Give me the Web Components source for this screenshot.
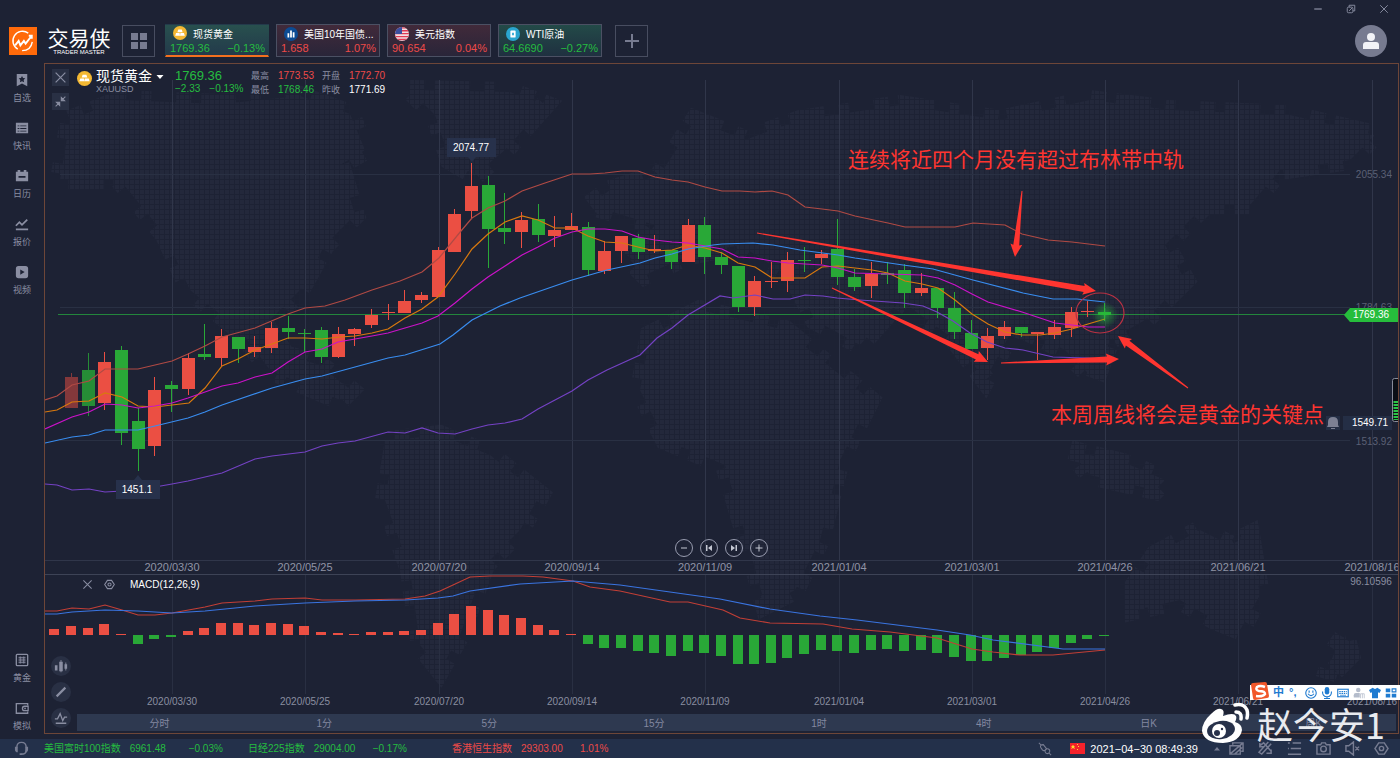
<!DOCTYPE html>
<html lang="zh-CN">
<head>
<meta charset="utf-8">
<title>交易侠</title>
<style>
  :root {
    --bg: #1d2234;
    --panel: #293044;
    --muted: #8a8ea2;
    --dim: #5b6074;
    --up: #eb4f43;
    --down: #29a837;
    --up-text: #ee4a48;
    --down-text: #25bd40;
    --frame: #6d4638;
  }
  body {
    margin: 0;
    background: var(--bg);
    color: #fff;
    font-family: "Liberation Sans", "Noto Sans CJK SC", sans-serif;
    font-size: 10px;
    overflow: hidden;
  }
</style>
</head>
<body>
<trade-app></trade-app>

<script>
// base class: every element clones its own template in an open shadow root
class BaseElement extends HTMLElement {
  constructor () {
    super();
    this.attachShadow({ mode: 'open' });
  }
  getTemplate () {
    const template = document.createElement('template');
    template.innerHTML = `
      <style>
        * { box-sizing: border-box; }
        button { margin: 0; padding: 0; border: 0; background: none; color: inherit; font: inherit; cursor: pointer; }
        ${this.getStyles()}
      </style>
      ${this.getMarkup()}
    `;
    return template;
  }
  render () {
    this.shadowRoot.appendChild(this.getTemplate().content.cloneNode(true));
  }
  connectedCallback () {
    if (!this.shadowRoot.hasChildNodes()) this.render();
  }
}

// ---------- icons (16 x 16 grid, currentColor) ----------
const ICONS = {
  star: '<path fill="currentColor" fill-rule="evenodd" d="M2 1h12v14l-6-3-6 3zM8 3.500l1.200 2.300 2.500.300-1.800 1.800.500 2.600L8 9.300l-2.400 1.200.500-2.600-1.800-1.800 2.500-.300z"/>',
  news: '<path fill="currentColor" fill-rule="evenodd" d="M1 2h14v12H1zM3 5h2v1H3zM6 5h7v1H6zM3 8h2v1H3zM6 8h7v1H6zM3 11h2v1H3zM6 11h7v1H6z"/>',
  calendar: '<path fill="currentColor" fill-rule="evenodd" d="M1 3h2V1h3v2h4V1h3v2h2v11H1zM4 8v2h8V8z"/>',
  quote: '<path fill="none" stroke="currentColor" stroke-width="2" d="M1 10l4-4 3 3 6-6M1 14h14"/>',
  video: '<path fill="currentColor" fill-rule="evenodd" d="M4 1h8q3 0 3 3v8q0 3-3 3H4q-3 0-3-3V4q0-3 3-3zM6 5v6l5-3z"/>',
  gold: '<g fill="none" stroke="currentColor"><rect x="1.500" y="1.500" width="13" height="13" rx="1" stroke-width="1.500"/><path d="M4 5h8M4 7h8M4 9h8M4 11h8M6 4v8M10 4v8" /></g>',
  wallet: '<g fill="none" stroke="currentColor" stroke-width="1.500"><path d="M14.500 5V3H1.500v11h13v-2"/><path d="M15 6h-4q-2.500 0-2.500 2.500T11 11h4z"/></g><circle cx="11.500" cy="8.500" r="1" fill="currentColor"/>',
  headset: '<path fill="none" stroke="currentColor" stroke-width="1.500" d="M3 7q0-5.500 5-5.500T13 7M13 10q0 4-5 4"/><path fill="currentColor" d="M1 6h3v6Q1 12 1 9zM15 6h-3v6q3 0 3-3zM6 13h3v2H6z"/>',
  close: '<path stroke="currentColor" fill="none" stroke-width="1.500" d="M2 2l12 12M14 2L2 14"/>',
  shrink: '<path stroke="currentColor" fill="currentColor" stroke-width="1.300" d="M14 2l-4 4M2 14l4-4M9 3v4h4zM3 9h4v4z"/>',
  hex: '<g fill="none" stroke="currentColor" stroke-width="1.500"><path d="M5 2h6l4 6-4 6H5L1 8z"/><circle cx="8" cy="8" r="2.300"/></g>',
  minus: '<path stroke="currentColor" stroke-width="2" d="M2 8h12"/>',
  plus: '<path stroke="currentColor" stroke-width="2" d="M1 8h14M8 1v14"/>',
  first: '<path fill="currentColor" d="M2 2h3v12H2zM14 2v12L6 8z"/>',
  last: '<path fill="currentColor" d="M11 2h3v12h-3zM2 2v12l8-6z"/>',
  grid: '<path fill="currentColor" d="M0 0h7v7H0zM9 0h7v7H9zM0 9h7v7H0zM9 9h7v7H9z"/>',
  restore: '<g fill="none" stroke="currentColor" stroke-width="1.500"><rect x="2" y="5" width="9" height="9" rx="2"/><path d="M5 5V2h9v9h-3M5 11l5-5"/></g>',
  candles: '<path fill="currentColor" d="M1 7h3v6H1zM6 3h4v11H6zM12 6h3v5h-3zM7.500 1h1v14h-1zM13 4h1v9h-1z"/>',
  pen: '<path stroke="currentColor" stroke-width="2.500" d="M3 13L13 3"/>',
  wave: '<path fill="none" stroke="currentColor" stroke-width="1.500" d="M1 9h3l3-6 3 8 2-4h3M2 14h12"/>',
  plug: '<g fill="none" stroke="currentColor" stroke-width="1.200"><path d="M1 1l3 3M3 6q-1-3 3-3l4 5q-3 3-5 1zM15 15l-3-3M8 11q0-4 4-3 3 2 0 5-3 1-4-2z"/></g>',
  layers: '<path fill="none" stroke="currentColor" stroke-width="1.500" d="M4 4V2h11v9h-2M1 5h11v9H1zM1 14L15 2M6 14l8-7"/>',
  tools: '<path fill="none" stroke="currentColor" stroke-width="1.600" d="M2 5l4-3 8 9M14 3L4 14l-3-2L11 1M9 13h5v-4M2 2v4h4"/>',
  list: '<path stroke="currentColor" stroke-width="1.600" d="M1 2h2M6 2h9M4 8h11M1 14h14M1 8h1"/>',
  camera: '<g fill="none" stroke="currentColor" stroke-width="1.500"><path d="M1 4h4l1-2h4l1 2h4v10H1z"/><circle cx="8" cy="8.500" r="3"/></g>',
  mute: '<path fill="none" stroke="currentColor" stroke-width="1.500" d="M1 5h3l5-4v14l-5-4H1zM11 6l4 4M15 6l-4 4"/>',
  caret: '<path fill="currentColor" d="M1 4h14l-7 8z"/>',
  up: '<path fill="currentColor" d="M2 11h12L8 4z"/>',
  user: '<circle cx="8" cy="4" r="4" fill="currentColor"/><path fill="currentColor" d="M0 16v-4q0-3 3-3h10q3 0 3 3v4z"/>',
  smile: '<g fill="none" stroke="currentColor" stroke-width="1.500"><circle cx="8" cy="8" r="7"/><path d="M4 9q4 5 8 0M5.500 4.500v3M10.500 4.500v3"/></g>',
  mic: '<rect x="5" y="0" width="6" height="10" rx="3" fill="currentColor"/><path fill="none" stroke="currentColor" stroke-width="1.500" d="M2 6q0 7 6 7t6-7M8 13v3M4 15.500h8"/>',
  keyboard: '<rect x="1" y="3" width="14" height="10" fill="none" stroke="currentColor" stroke-width="1.500"/><path stroke="currentColor" stroke-width="1.500" stroke-dasharray="2 1" d="M3 6h10M3 8.500h10"/><path stroke="currentColor" d="M4 11h8"/>',
  person: '<circle cx="7" cy="4" r="3" fill="currentColor"/><path fill="currentColor" d="M1 14v-3q0-3 3-3h5v6z"/><path fill="none" stroke="currentColor" d="M10 15V9h5v6M12.500 9v6"/>',
  shirt: '<path fill="currentColor" d="M5 1q3 3 6 0l5 3-2 4-2-1v8H4V7L2 8 0 4z"/>',
  blocks: '<path fill="currentColor" d="M1 2h6v5H1zM1 9h6v5H1zM9 9h6v5H9z"/><path fill="none" stroke="currentColor" stroke-width="1.500" d="M9.500 2.500h5v4h-5z"/>',
  coin: '<circle cx="8" cy="8" r="8" fill="#f3b833"/><path fill="#fff" d="M6 4h4l1 3H5zM3.500 8h4l.500 3h-5.500zM8.500 8h4l1 3H8z"/>',
  bond: '<circle cx="8" cy="8" r="8" fill="#0c4b93"/><path fill="#fff" d="M4 7h2v5H4zM7 4h2v8H7zM10 6h2v6h-2z"/>',
  usa: '<clipPath id="c"><circle cx="8" cy="8" r="8"/></clipPath><g clip-path="url(#c)"><path fill="#f3dfe4" d="M0 0h16v16H0z"/><path stroke="#df3a54" stroke-width="1.600" d="M0 1h16M0 4.300h16M0 7.600h16M0 11h16M0 14.300h16"/><path fill="#3b4f9f" d="M0 0h8v8H0z"/></g>',
  oil: '<circle cx="8" cy="8" r="8" fill="#2aa5cf"/><rect x="5" y="4" width="6" height="8" rx="1" fill="#fff"/><path fill="#2aa5cf" d="M7 6.500h2v3H7z"/>',
  brand: '<path fill="#ff6a0a" d="M0 0h16v16H0z"/><path fill="none" stroke="#fff" stroke-width=".8" d="M11 3.500A5.500 5.500 0 1 0 5 12.700M7.500 13.500q5 0 5.800-5"/><path fill="none" stroke="#fff" stroke-width="1.100" d="M3.500 10.500l2-2.500 1 2.500L8.500 8l1 1.500L13 5M11.300 5H13v1.700"/>'
};

class UiIcon extends BaseElement {
  getStyles () {
    return `
      :host { display: inline-block; width: 16px; height: 16px; flex: none; }
      svg { display: block; width: 100%; height: 100%; }
    `;
  }
  getMarkup () {
    return `<svg viewBox="0 0 16 16" aria-hidden="true">${ICONS[this.getAttribute('name')]}</svg>`;
  }
}

// ---------- header ----------
class TickerTab extends BaseElement {
  getStyles () {
    const up = this.hasAttribute('up');
    return `
      :host { display: block; width: 104px; height: 33px; }
      button {
        display: grid; grid-template-columns: 1fr auto; align-content: center;
        width: 100%; height: 100%; padding: 0 3px 0 4px; text-align: left;
        border: 1px solid #4b5063;
        background: linear-gradient(${up ? '#412a3a, #292539' : '#234a48, #1f3040'});
      }
      :host([active]) button { border-color: transparent; border-bottom: 2px solid #f3701f; background: linear-gradient(#28504e, #233a4b); }
      .name { grid-column: 1 / 3; display: flex; align-items: center; gap: 6px; height: 15px; padding-left: 3px; white-space: nowrap; }
      .name ui-icon { width: 14px; height: 14px; }
      .num { color: var(${up ? '--up-text' : '--down-text'}); line-height: 14px; font-size: 11px; }
    `;
  }
  getMarkup () {
    return `
      <button type="button">
        <span class="name"><ui-icon name="${this.getAttribute('icon')}"></ui-icon><slot></slot></span>
        <span class="num">${this.getAttribute('price')}</span>
        <span class="num">${this.getAttribute('change')}</span>
      </button>
    `;
  }
}

class AppHeader extends BaseElement {
  getStyles () {
    return `
      :host { display: block; height: 63px; }
      .window { display: flex; justify-content: flex-end; align-items: center; gap: 23px; height: 18px; padding-right: 11px; color: var(--muted); }
      .window ui-icon { display: block; width: 10px; height: 10px; }
      .bar { display: flex; align-items: center; height: 45px; padding: 0 13px 0 9px; }
      .logo { width: 28px; height: 28px; margin-right: 10px; }
      .brand { width: 64px; margin-right: 11px; text-align: center; white-space: nowrap; }
      .brand b { display: block; font: 400 21px/23px "Noto Sans CJK SC", sans-serif; }
      .brand small { display: block; font-size: 6px; line-height: 7px; }
      .box { display: grid; place-items: center; width: 33px; height: 32px; border: 1px solid #484d60; color: #777b90; }
      .tabs { display: flex; gap: 7px; margin: 0 13px 0 10px; }
      .avatar { display: grid; place-items: center; width: 32px; height: 32px; margin-left: auto; border-radius: 50%; background: #777b90; color: #f2f3f7; }
    `;
  }
  getMarkup () {
    return `
      <div class="window">
        <button aria-label="最小化"><ui-icon name="minus"></ui-icon></button>
        <button aria-label="还原"><ui-icon name="restore"></ui-icon></button>
        <button aria-label="关闭"><ui-icon name="close"></ui-icon></button>
      </div>
      <div class="bar">
        <ui-icon class="logo" name="brand"></ui-icon>
        <div class="brand"><b>交易侠</b><small>TRADER MASTER</small></div>
        <button class="box" aria-label="布局"><ui-icon name="grid"></ui-icon></button>
        <div class="tabs">
          <ticker-tab active icon="coin" price="1769.36" change="−0.13%">现货黄金</ticker-tab>
          <ticker-tab up icon="bond" price="1.658" change="1.07%">美国10年国债...</ticker-tab>
          <ticker-tab up icon="usa" price="90.654" change="0.04%">美元指数</ticker-tab>
          <ticker-tab icon="oil" price="64.6690" change="−0.27%">WTI原油</ticker-tab>
        </div>
        <button class="box" aria-label="添加"><ui-icon name="plus"></ui-icon></button>
        <button class="avatar" aria-label="用户"><ui-icon name="user"></ui-icon></button>
      </div>
    `;
  }
}

// ---------- side navigation ----------
class SideNav extends BaseElement {
  getStyles () {
    return `
      :host { display: block; width: 44px; }
      nav { display: flex; flex-direction: column; gap: 6px; height: 100%; padding-top: 1px; }
      a { display: flex; flex-direction: column; align-items: center; gap: 4px; height: 42px; padding-top: 9px; color: var(--muted); text-decoration: none; font-size: 9px; line-height: 14px; }
      a ui-icon { width: 14px; height: 14px; }
      .push { margin-top: auto; }
    `;
  }
  getMarkup () {
    const item = (icon, text, cls = '') => `<a class="${cls}" href="#"><ui-icon name="${icon}"></ui-icon>${text}</a>`;
    return `
      <nav>
        ${item('star', '自选')}${item('news', '快讯')}${item('calendar', '日历')}
        ${item('quote', '报价')}${item('video', '视频')}
        ${item('gold', '黄金', 'push')}${item('wallet', '模拟')}
      </nav>
    `;
  }
}

// ---------- chart data ----------
// [colour, high, body top, body bottom, low], one candle a week
const CANDLES = [
  ['r',373,377,408,408],['g',353,370,406,416],['r',352,362,403,410],['g',346,350,433,445],['g',408,421,449,471],
  ['r',377,390,446,456],['g',381,385,389,412],['r',353,358,389,395],['g',324,354,357,360],['r',329,336,358,366],
  ['g',337,337,349,363],['r',336,347,352,357],['r',322,328,348,353],['g',316,328,332,339],['g',329,333,334,352],
  ['g',327,330,357,363],['r',327,334,357,358],['r',328,329,334,346],['r',309,315,325,328],['r',304,312,313,320],
  ['r',290,301,313,313],['r',292,295,300,303],['r',247,250,297,297],['r',209,214,252,252],['r',163,186,211,219],
  ['g',176,185,229,268],['g',193,228,232,244],['r',212,220,232,248],['g',204,219,235,242],['r',216,230,236,247],
  ['r',213,226,230,230],['g',222,227,270,276],['r',241,251,271,274],['r',236,236,251,263],['g',234,238,252,259],
  ['r',235,249,251,253],['g',250,250,262,269],['r',219,225,262,262],['g',217,225,257,274],['g',252,257,265,274],
  ['g',266,266,307,312],['r',276,281,307,316],['r',262,281,282,288],['r',252,260,281,292],['g',247,260,261,272],
  ['r',250,254,258,264],['g',219,249,277,285],['g',269,277,287,291],['r',262,274,286,298],['g',262,273,275,284],
  ['g',264,270,293,308],['r',273,288,293,296],['g',288,288,308,318],['g',292,308,332,339],['g',320,333,349,349],
  ['r',328,336,348,360],['r',321,327,336,339],['g',327,327,333,337],['r',332,332,334,360],['r',320,327,335,339],
  ['r',307,312,328,337],['r',301,311,312,317],['g',303,312,315,321]
];

const LINES = {
  upper: ['#b04a44', '45,400 57,396 72,385 89,381 105,369 138,369 172,361 188,354 205,346 222,337 255,328 288,314 305,308 325,306 345,300 372,290 400,281 422,272 439,258 461,231 472,218 488,208 505,201 522,191 545,183 572,174 590,174 605,173 622,171 638,171 655,177 672,180 688,182 705,187 722,191 740,191 755,192 772,191 788,195 805,207 822,209 838,211 855,216 888,223 905,227 955,227 973,223 1005,225 1022,234 1048,240 1072,242 1105,246'],
  ma5: ['#d9790e', '45,412 57,410 72,402 89,401 105,393 122,397 138,406 155,407 189,403 205,388 222,366 238,359 255,350 272,344 288,338 305,338 322,339 340,337 355,336 372,333 388,329 405,318 422,309 438,297 455,274 472,249 488,234 505,222 522,216 538,220 555,228 572,228 588,236 605,242 622,243 638,247 655,251 672,250 688,245 705,248 722,253 738,263 755,267 772,278 805,278 822,267 838,266 855,268 872,270 888,273 905,281 922,284 938,288 955,300 972,314 988,324 1005,332 1022,335 1040,335 1055,333 1072,329 1088,324 1105,319'],
  ma10: ['#cb12c9', '45,429 72,417 89,412 105,404 122,405 138,408 155,406 172,403 188,398 222,386 238,383 255,377 272,373 288,362 305,352 322,349 338,342 355,339 372,336 388,333 405,328 422,323 438,316 455,303 472,289 488,277 505,266 522,255 538,247 555,238 572,232 588,229 605,229 622,231 638,237 655,240 672,242 688,243 705,246 722,249 738,257 755,258 772,261 788,263 805,264 822,265 838,268 855,273 888,274 922,275 938,278 955,285 972,294 988,302 1022,312 1055,323 1072,325 1088,327 1105,327'],
  mid: ['#398df0', '45,443 72,437 89,435 105,430 138,430 155,426 188,418 205,412 222,405 272,388 305,379 322,376 355,367 388,358 405,355 440,344 453,335 472,320 500,306 520,298 572,280 607,270 640,263 655,258 672,254 688,249 713,245 722,244 753,243 773,245 800,250 838,255 855,258 903,265 933,269 973,280 1023,293 1053,299 1077,299 1105,302'],
  lower: ['#7442c4', '45,484 57,485 72,490 89,489 105,492 122,491 138,489 155,487 172,484 188,481 222,473 255,459 272,456 305,452 322,446 338,443 355,441 388,432 405,433 422,428 438,433 455,434 472,429 488,425 505,423 522,419 538,409 555,400 572,391 588,380 607,370 640,355 657,338 672,328 688,315 720,296 733,298 755,295 773,299 790,299 805,295 823,296 837,298 860,300 903,303 923,306 937,312 953,321 970,333 987,342 1005,348 1023,350 1053,357 1087,358 1105,359']
};

// end of every histogram bar, the zero line is at 635
const MACD = [629,626,628,624,634,644,639,637,631,628,623,623,625,623,624,626,632,633,634,632,632,631,630,623,614,606,610,615,618,625,630,634,
  644,648,648,651,653,656,651,653,656,664,664,663,658,654,650,651,653,650,649,651,650,653,657,661,661,658,655,652,648,643,639,636];
const DIF = '45,611 57,611 72,608 89,609 105,605 122,610 138,615 155,615 172,613 205,607 222,603 255,601 272,599 305,598 322,600 355,600 405,599 425,596 440,591 453,585 470,577 490,576 523,576 543,577 573,581 590,587 620,591 670,602 688,602 723,610 740,618 770,623 823,624 852,629 890,632 937,638 972,649 993,652 1020,655 1053,655 1105,650';
const DEA = '45,614 57,614 72,612 105,610 138,611 172,613 205,611 255,606 305,603 355,601 405,600 438,598 453,596 470,591 520,584 573,581 620,585 670,592 720,599 770,609 820,616 857,620 937,630 970,635 993,640 1063,649 1105,649';

const DATES = ['2020/03/30','2020/05/25','2020/07/20','2020/09/14','2020/11/09','2021/01/04','2021/03/01','2021/04/26','2021/06/21','2021/08/16'];
const STEP = 133.3;
const weekX = i => Math.round(72 + i * STEP / 8);
const gridX = i => Math.round(172 + i * STEP);

// dotted world map behind both charts, the dashed stroke roughens the coasts
const WORLD = `
  <defs>
    <pattern id="dots" width="5" height="5" patternUnits="userSpaceOnUse"><path fill="#23283b" d="M0 0h4v4H0z"/></pattern>
  </defs>
  <path fill="url(#dots)" stroke="url(#dots)" stroke-width="20" stroke-dasharray="15 10 35 15 10 25" d="M70 120L120 100 220 104 300 96 350 114 365 150 340 165 355 215 325 245 300 290 265 325 285 355 320 365 350 390 340 400 270 370 240 330 190 290 165 235 120 180 60 180z
    M410 90L510 92 545 105 505 150 475 175 450 160 435 115z
    M395 440L440 435 490 455 540 495 520 530 485 565 460 635 440 670 420 645 410 570 385 500z
    M590 205L610 190 660 175 695 120 745 140 800 120 900 105 1000 120 1090 100 1170 110 1290 115 1375 135 1350 160 1280 170 1250 205 1205 205 1165 245 1185 280 1145 320 1110 340 1095 380 1065 350 1015 325 985 380 955 340 900 300 860 345 815 320 795 280 740 245 690 255 645 275 630 260 655 225z
    M650 335L700 310 785 330 840 375 870 400 840 460 820 540 795 590 765 605 750 550 725 465 665 440 640 390z
    M1070 450L1130 465 1165 480 1155 490 1090 475z
    M1135 585L1155 555 1200 530 1230 545 1250 535 1260 595 1240 630 1215 620 1180 600 1135 610z
    M1335 650L1345 635 1350 655 1325 680z"/>
`;
const polyline = (color, points) => `<polyline fill="none" stroke="${color}" stroke-width="1.200" points="${points}"/>`;

// drawn arrow: thin tail that grows up to the head
function arrow (x1, y1, x2, y2) {
  const len = Math.hypot(x2 - x1, y2 - y1);
  const ux = (x2 - x1) / len, uy = (y2 - y1) / len;
  const at = (d, side) => `${x1 + ux * d - uy * side},${y1 + uy * d + ux * side}`;
  return `<polygon fill="#ff3530" points="${[at(0, -.5), at(len - 12, -3), at(len - 13, -6), at(len, 0), at(len - 13, 6), at(len - 12, 3), at(0, .5)].join(' ')}"/>`;
}

class PriceChart extends BaseElement {
  getStyles () {
    return `
      :host { display: grid; min-height: 0; border-bottom: 1px solid #3d4356; }
      svg, .info, .zoom { grid-area: 1 / 1; }
      svg { width: 100%; height: 100%; min-height: 0; }
      .dates, .axis { fill: #9094a6; font-size: 11px; text-anchor: middle; }
      .axis { fill: var(--dim); font-size: 10px; text-anchor: end; }
      .tip { fill: #fff; font-size: 10px; text-anchor: middle; }
      .note { fill: #ff3530; font: 21px "Noto Sans CJK SC", sans-serif; }
      .info { display: flex; align-items: flex-start; align-self: start; justify-self: start; padding: 5px 0 0 7px; z-index: 1; }
      .tools { display: grid; gap: 7px; margin-right: 8px; }
      .tools button { display: grid; place-items: center; width: 17px; height: 17px; background: var(--panel); color: var(--muted); }
      .tools ui-icon { width: 13px; height: 13px; }
      .coin { width: 15px; height: 15px; margin: 2px 4px 0 0; }
      .name { width: 79px; }
      .name button { display: flex; align-items: center; gap: 4px; font-size: 14px; line-height: 15px; }
      .name ui-icon { width: 8px; height: 8px; }
      .name small { display: block; color: var(--muted); font-size: 9px; line-height: 10px; }
      .last { width: 76px; color: var(--down-text); line-height: 12px; }
      .last b { display: block; font-weight: 400; font-size: 13px; line-height: 14px; }
      .last span { margin-right: 9px; }
      dl { display: grid; grid-template-columns: 27px 44px 27px 40px; margin: 0; line-height: 14px; }
      dt { color: var(--muted); font-size: 9px; }
      dd { margin: 0; }
      .up { color: var(--up-text); }
      .down { color: var(--down-text); }
      .zoom { display: flex; align-self: end; justify-self: center; gap: 7px; margin-bottom: 17px; z-index: 1; }
      .zoom button { display: grid; place-items: center; width: 18px; height: 18px; border: 1px solid #989caf; border-radius: 50%; color: #c4c7d2; }
      .zoom ui-icon { width: 8px; height: 8px; }
    `;
  }
  getCandles () {
    return CANDLES.map(([c, high, top, bottom, low], i) => {
      const x = weekX(i);
      const color = c === 'r' ? 'var(--up)' : 'var(--down)';
      return `<g fill="${color}" opacity="${i === 0 ? .5 : i === 1 ? .8 : 1}">
        <rect x="${x - 1}" y="${high}" width="1" height="${low - high}"/>
        <rect x="${x - 7}" y="${top}" width="13" height="${bottom - top}"/></g>`;
    }).join('');
  }
  getMarkup () {
    return `
      <svg viewBox="45 64 1353 510">
        ${WORLD}
        <g stroke="#30364a">
          ${DATES.map((d, i) => `<path d="M${gridX(i)}.5 80V560"/>`).join('')}
          <path stroke="#293043" d="M60 174.500H1350M60 307.500H1350M60 440.500H1350"/><path d="M45 560.500H1398"/>
        </g>
        <path stroke="#23863c" d="M58 314.500H1346"/>
        <g class="dates">${DATES.map((d, i) => `<text x="${gridX(i)}" y="571">${d}</text>`).join('')}</g>
        <g class="axis"><text x="1392" y="178">2055.34</text><text x="1392" y="311">1784.63</text><text x="1392" y="445">1513.92</text></g>
        ${this.getCandles()}
        ${Object.values(LINES).map(([color, points]) => polyline(color, points)).join('')}
        <radialGradient id="glow"><stop stop-color="#26c83a" stop-opacity=".6"/><stop offset="1" stop-color="#26c83a" stop-opacity="0"/></radialGradient>
        <circle cx="1105" cy="315" r="13" fill="url(#glow)"/>
        <path fill="#27314b" d="M447 138h49v19h-20l-4 5-4-5h-21zM116 480h18l4-5 4 5h18v19h-44z"/>
        <text class="tip" x="471" y="151">2074.77</text>
        <text class="tip" x="137" y="493">1451.1</text>
        <path fill="#26bd3c" d="M1344 315l6-7h48v14h-48z"/>
        <path fill="#242e45" d="M1326 416h14v14h-14zM1343 416h49v14h-49z"/>
        <path fill="#7c8094" d="M1327 427l1-2v-3q0-5 5-5t5 5v3l1 2zM1331 428h4v1h-4z"/>
        <g class="tip"><text x="1371" y="318">1769.36</text><text x="1370" y="426">1549.71</text></g>
        <rect x="1392.500" y="378.500" width="8" height="43" rx="2" fill="#0b0e16" stroke="#888c9a"/>
        <path stroke="#2bc548" stroke-width="5" stroke-dasharray="2 1" d="M1396 401v19"/>
        <text class="note" x="848" y="167">连续将近四个月没有超过布林带中轨</text>
        <text class="note" x="1051" y="422">本周周线将会是黄金的关键点</text>
        ${arrow(757, 233, 1096, 291)}${arrow(832, 288, 988, 362)}${arrow(1001, 363, 1119, 359)}
        ${arrow(1022, 191, 1015, 257)}${arrow(1188, 388, 1118, 336)}
        <ellipse cx="1100" cy="313" rx="24" ry="20" fill="none" stroke="#b93143" stroke-width="1.200"/>
      </svg>
      <div class="info">
        <div class="tools">
          <button aria-label="关闭"><ui-icon name="close"></ui-icon></button>
          <button aria-label="缩小"><ui-icon name="shrink"></ui-icon></button>
        </div>
        <ui-icon class="coin" name="coin"></ui-icon>
        <div class="name"><button>现货黄金<ui-icon name="caret"></ui-icon></button><small>XAUUSD</small></div>
        <div class="last"><b>1769.36</b><span>−2.33</span><span>−0.13%</span></div>
        <dl>
          <dt>最高</dt><dd class="up">1773.53</dd><dt>开盘</dt><dd class="up">1772.70</dd>
          <dt>最低</dt><dd class="down">1768.46</dd><dt>昨收</dt><dd>1771.69</dd>
        </dl>
      </div>
      <div class="zoom">
        <button aria-label="缩小"><ui-icon name="minus"></ui-icon></button>
        <button aria-label="最前"><ui-icon name="first"></ui-icon></button>
        <button aria-label="最后"><ui-icon name="last"></ui-icon></button>
        <button aria-label="放大"><ui-icon name="plus"></ui-icon></button>
      </div>
    `;
  }
}

class MacdChart extends BaseElement {
  getStyles () {
    return `
      :host { display: grid; height: 139px; }
      svg, .title { grid-area: 1 / 1; }
      svg { width: 100%; height: 100%; min-height: 0; }
      text { fill: #8a8ea0; font-size: 10px; text-anchor: middle; }
      .title { display: flex; align-items: center; align-self: start; justify-self: start; gap: 11px; height: 18px; padding-left: 37px; z-index: 1; }
      .title button { display: block; color: var(--muted); }
      .title ui-icon { display: block; width: 11px; height: 11px; }
      .title span { padding-left: 4px; }
    `;
  }
  getMarkup () {
    const bars = MACD.map((y, i) => {
      const x = weekX(i - 1) - 6;
      return y < 635
        ? `<rect x="${x}" y="${y}" width="10" height="${635 - y}" fill="var(--up)"/>`
        : `<rect x="${x}" y="635" width="10" height="${y - 635}" fill="var(--down)"/>`;
    }).join('');
    return `
      <svg viewBox="45 575 1353 139">
        ${WORLD}
        <g stroke="#292f42">${DATES.map((d, i) => `<path d="M${gridX(i)}.5 575V694"/>`).join('')}</g>
        ${bars}
        ${polyline('#c23f36', DIF)}${polyline('#3a74e0', DEA)}
        ${DATES.map((d, i) => `<text x="${gridX(i)}" y="705">${d}</text>`).join('')}
        <text x="1371" y="585">96.10596</text>
      </svg>
      <div class="title">
        <button aria-label="关闭"><ui-icon name="close"></ui-icon></button>
        <button aria-label="设置"><ui-icon name="hex"></ui-icon></button>
        <span>MACD(12,26,9)</span>
      </div>
    `;
  }
}

class IntervalBar extends BaseElement {
  getStyles () {
    return `
      :host { display: flex; align-items: flex-end; height: 19px; padding-right: 2px; }
      .tools { display: grid; gap: 6px; width: 32px; padding: 0 0 5px 6px; }
      .tools button { display: grid; place-items: center; width: 20px; height: 20px; border-radius: 50%; background: var(--panel); color: var(--muted); }
      .tools ui-icon { width: 14px; height: 14px; }
      .list { display: grid; grid-template-columns: repeat(8, 1fr); flex: 1; height: 17px; margin-bottom: 2px; background: #2e3950; }
      .list button { color: #8388a0; }
    `;
  }
  getMarkup () {
    const names = ['分时', '1分', '5分', '15分', '1时', '4时', '日K', '周K'];
    return `
      <div class="tools">
        <button aria-label="图表类型"><ui-icon name="candles"></ui-icon></button>
        <button aria-label="画线"><ui-icon name="pen"></ui-icon></button>
        <button aria-label="指标"><ui-icon name="wave"></ui-icon></button>
      </div>
      <div class="list">${names.map(n => `<button>${n}</button>`).join('')}</div>
    `;
  }
}

// ---------- status bar ----------
class IndexQuote extends BaseElement {
  getStyles () {
    return `
      :host { display: flex; gap: 9px; width: 204px; color: var(--down-text); white-space: nowrap; }
      :host([up]) { color: var(--up-text); }
      .price { width: 50px; }
    `;
  }
  getMarkup () {
    return `<slot></slot><span class="price">${this.getAttribute('price')}</span><span>${this.getAttribute('change')}</span>`;
  }
}

class StatusBar extends BaseElement {
  getStyles () {
    return `
      :host { display: flex; align-items: center; height: 19px; padding-right: 11px; background: #23304a; line-height: 18px; }
      button { display: block; color: #777c92; }
      button ui-icon { display: block; width: 15px; height: 15px; }
      .service { width: 44px; padding-left: 14px; }
      .plug { margin-left: auto; margin-right: 18px; }
      .plug ui-icon { width: 14px; height: 14px; }
      .flag { width: 15px; height: 11px; margin-right: 5px; }
      time { font-size: 11px; }
      .caret { margin: 0 8px 0 15px; }
      .caret ui-icon { width: 8px; height: 8px; }
      .icons { display: flex; gap: 14px; }
    `;
  }
  getMarkup () {
    return `
      <button class="service" aria-label="客服"><ui-icon name="headset"></ui-icon></button>
      <index-quote price="6961.48" change="−0.03%">美国富时100指数</index-quote>
      <index-quote price="29004.00" change="−0.17%">日经225指数</index-quote>
      <index-quote up price="29303.00" change="1.01%">香港恒生指数</index-quote>
      <button class="plug" aria-label="连接"><ui-icon name="plug"></ui-icon></button>
      <svg class="flag" viewBox="0 0 15 11"><path fill="#f5222b" d="M0 0h15v11H0z"/><path fill="#ffd92e" d="M3 2l1 1h1l-1 1 1 2-2-1-2 1 1-2-1-1h1zM7 1h1v1H7zM8 3h1v1H8zM7 6h1v1H7z"/></svg>
      <time>2021−04−30 08:49:39</time>
      <button class="caret" aria-label="更多"><ui-icon name="up"></ui-icon></button>
      <div class="icons">
        ${['layers', 'tools', 'list', 'camera', 'mute', 'hex'].map(n => `<button aria-label="${n}"><ui-icon name="${n}"></ui-icon></button>`).join('')}
      </div>
    `;
  }
}

// ---------- floating parts ----------
class ImeBar extends BaseElement {
  getStyles () {
    return `
      :host { position: absolute; right: 0; bottom: 58px; display: flex; align-items: center; gap: 4px; height: 15px; padding: 0 3px 0 23px; background: #fff; color: #1f7bd0; font-size: 11px; }
      .logo { position: absolute; left: 0; top: -3px; width: 20px; height: 19px; }
      ui-icon { width: 12px; height: 12px; }
      .off { color: #b4bccb; }
      b { width: 12px; line-height: 15px; }
    `;
  }
  getMarkup () {
    return `
      <svg class="logo" viewBox="0 0 20 19"><path fill="#f1572a" d="M1 3q0-2 2-2l12-1q2 0 2 2l2 12q0 2-2 2L5 18q-2 0-2-2z"/><path fill="none" stroke="#fff" stroke-width="2.500" d="M15 5q-5-2-8 0-2 3 2 4 6 0 6 3-2 3-9 2"/></svg>
      <b>中</b><b>°,</b>
      <ui-icon name="smile"></ui-icon><ui-icon name="mic"></ui-icon><ui-icon name="keyboard"></ui-icon>
      <ui-icon class="off" name="person"></ui-icon><ui-icon name="shirt"></ui-icon><ui-icon name="blocks"></ui-icon>
    `;
  }
}

class WeiboMark extends BaseElement {
  getStyles () {
    return `
      :host { position: absolute; right: 15px; bottom: 14px; display: flex; align-items: center; gap: 6px; color: #e9ebef; font: 36px/40px "Noto Sans CJK SC", sans-serif; }
      svg { width: 50px; height: 42px; }
    `;
  }
  getMarkup () {
    return `
      <svg viewBox="0 0 50 42">
        <path fill="#fff" d="M20 7q4 1 2 7 11-4 13 0 1 2-1 6 7 2 7 8-2 12-19 13Q3 41 1 29 1 20 10 12q6-6 10-5z"/>
        <ellipse cx="20" cy="28" rx="14" ry="9" fill="#27314a" transform="rotate(-8 20 28)"/>
        <circle cx="18" cy="29" r="7" fill="#fff"/><circle cx="16" cy="31" r="3" fill="#27314a"/><circle cx="21" cy="27" r="1.200" fill="#27314a"/>
        <path fill="none" stroke="#fff" stroke-width="3.500" stroke-linecap="round" d="M34 3q9-2 12 5 1 4 0 8M35 10q6 0 5 7"/>
      </svg>
      <span>赵今安1</span>
    `;
  }
}

class TradeApp extends BaseElement {
  getStyles () {
    return `
      :host { position: relative; display: flex; flex-direction: column; min-height: 100vh; background: var(--bg); overflow: hidden; }
      .main { display: flex; flex: 1; margin-bottom: 5px; }
      .frame { display: flex; flex-direction: column; flex: 1; min-width: 0; margin-right: 1px; border: 1px solid var(--frame); }
      price-chart { flex: 1; }
    `;
  }
  getMarkup () {
    return `
      <app-header></app-header>
      <div class="main">
        <side-nav></side-nav>
        <div class="frame">
          <price-chart></price-chart>
          <macd-chart></macd-chart>
          <interval-bar></interval-bar>
        </div>
      </div>
      <status-bar></status-bar>
      <ime-bar></ime-bar>
      <weibo-mark></weibo-mark>
    `;
  }
}

customElements.define('ui-icon', UiIcon);
customElements.define('ticker-tab', TickerTab);
customElements.define('app-header', AppHeader);
customElements.define('side-nav', SideNav);
customElements.define('price-chart', PriceChart);
customElements.define('macd-chart', MacdChart);
customElements.define('interval-bar', IntervalBar);
customElements.define('index-quote', IndexQuote);
customElements.define('status-bar', StatusBar);
customElements.define('ime-bar', ImeBar);
customElements.define('weibo-mark', WeiboMark);
customElements.define('trade-app', TradeApp);
</script>
</body>
</html>
